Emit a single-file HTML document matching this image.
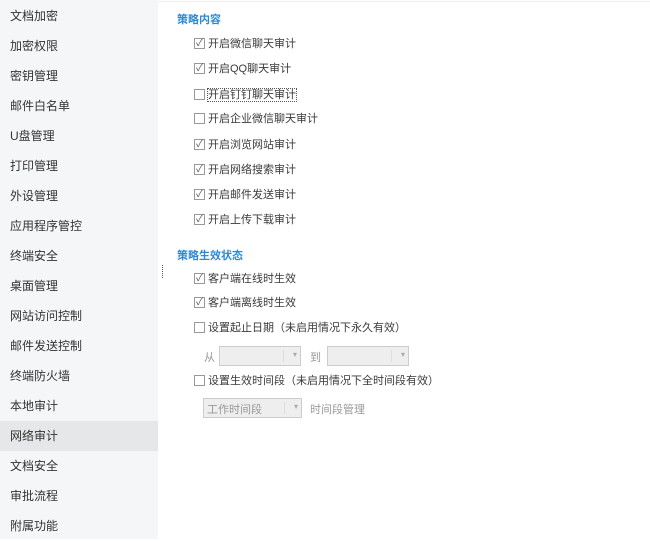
<!DOCTYPE html>
<html><head><meta charset="utf-8"><style>
*{margin:0;padding:0;box-sizing:border-box}
body{width:650px;height:539px;background:#fff;font-family:"Liberation Sans","Noto Sans CJK SC",sans-serif;font-size:11px;color:#3a3a3a;position:relative;overflow:hidden}
.side{position:absolute;left:0;top:0;width:158px;height:539px;background:#f5f6f8}
.it{position:absolute;left:0;width:158px;height:30px;line-height:30px;padding-left:10px;font-size:12px;color:#333}
.sel{background:#e6e7e9}
.h{position:absolute;left:177px;color:#2a8ad4;font-weight:bold;font-size:11px}
.cb{position:absolute;left:194px;height:14px;line-height:14px}
.cb i{position:absolute;left:0;top:1px;width:11px;height:11px;border:1px solid #999;background:#fff;font-style:normal;font-size:10px;line-height:9px;text-align:center;color:#555}
.cb span{margin-left:14px;white-space:nowrap}
.sl{position:absolute;height:20px;border:1px solid #ccc;background:#eee}
.sl:after{content:"▾";position:absolute;right:3px;top:3px;font-size:8px;color:#aaa}
.sl b{position:absolute;right:16px;top:3px;bottom:3px;border-left:1px solid #ddd}
.g{position:absolute;color:#999}
</style></head><body>
<div style="position:absolute;left:158px;top:0;right:0;height:2px;border-bottom:1px solid #eee"></div>
<div class="side">
<div class="it" style="top:1px">文档加密</div>
<div class="it" style="top:31px">加密权限</div>
<div class="it" style="top:61px">密钥管理</div>
<div class="it" style="top:91px">邮件白名单</div>
<div class="it" style="top:121px">U盘管理</div>
<div class="it" style="top:151px">打印管理</div>
<div class="it" style="top:181px">外设管理</div>
<div class="it" style="top:211px">应用程序管控</div>
<div class="it" style="top:241px">终端安全</div>
<div class="it" style="top:271px">桌面管理</div>
<div class="it" style="top:301px">网站访问控制</div>
<div class="it" style="top:331px">邮件发送控制</div>
<div class="it" style="top:361px">终端防火墙</div>
<div class="it" style="top:391px">本地审计</div>
<div class="it sel" style="top:421px">网络审计</div>
<div class="it" style="top:451px">文档安全</div>
<div class="it" style="top:481px">审批流程</div>
<div class="it" style="top:511px">附属功能</div>
</div>
<div style="position:absolute;left:162px;top:265px;width:1px;height:13px;border-left:1px dotted #555"></div>
<div class="h" style="top:11px">策略内容</div>
<div class="cb" style="top:37px"><i>✓</i><span>开启微信聊天审计</span></div>
<div class="cb" style="top:62px"><i>✓</i><span>开启QQ聊天审计</span></div>
<div class="cb" style="top:88px"><i></i><span style="outline:1px dotted #555">开启钉钉聊天审计</span></div>
<div class="cb" style="top:112px"><i></i><span>开启企业微信聊天审计</span></div>
<div class="cb" style="top:138px"><i>✓</i><span>开启浏览网站审计</span></div>
<div class="cb" style="top:163px"><i>✓</i><span>开启网络搜索审计</span></div>
<div class="cb" style="top:188px"><i>✓</i><span>开启邮件发送审计</span></div>
<div class="cb" style="top:213px"><i>✓</i><span>开启上传下载审计</span></div>
<div class="h" style="top:247px">策略生效状态</div>
<div class="cb" style="top:272px"><i>✓</i><span>客户端在线时生效</span></div>
<div class="cb" style="top:296px"><i>✓</i><span>客户端离线时生效</span></div>
<div class="cb" style="top:321px"><i></i><span>设置起止日期（未启用情况下永久有效）</span></div>
<div class="g" style="left:204px;top:349px">从</div>
<div class="sl" style="left:219px;top:346px;width:82px"><b></b></div>
<div class="g" style="left:310px;top:349px">到</div>
<div class="sl" style="left:327px;top:346px;width:82px"><b></b></div>
<div class="cb" style="top:374px"><i></i><span>设置生效时间段（未启用情况下全时间段有效）</span></div>
<div class="sl" style="left:203px;top:398px;width:99px"><b></b><span style="position:absolute;left:3px;top:2px;color:#999">工作时间段</span></div>
<div class="g" style="left:310px;top:401px">时间段管理</div>
</body></html>
